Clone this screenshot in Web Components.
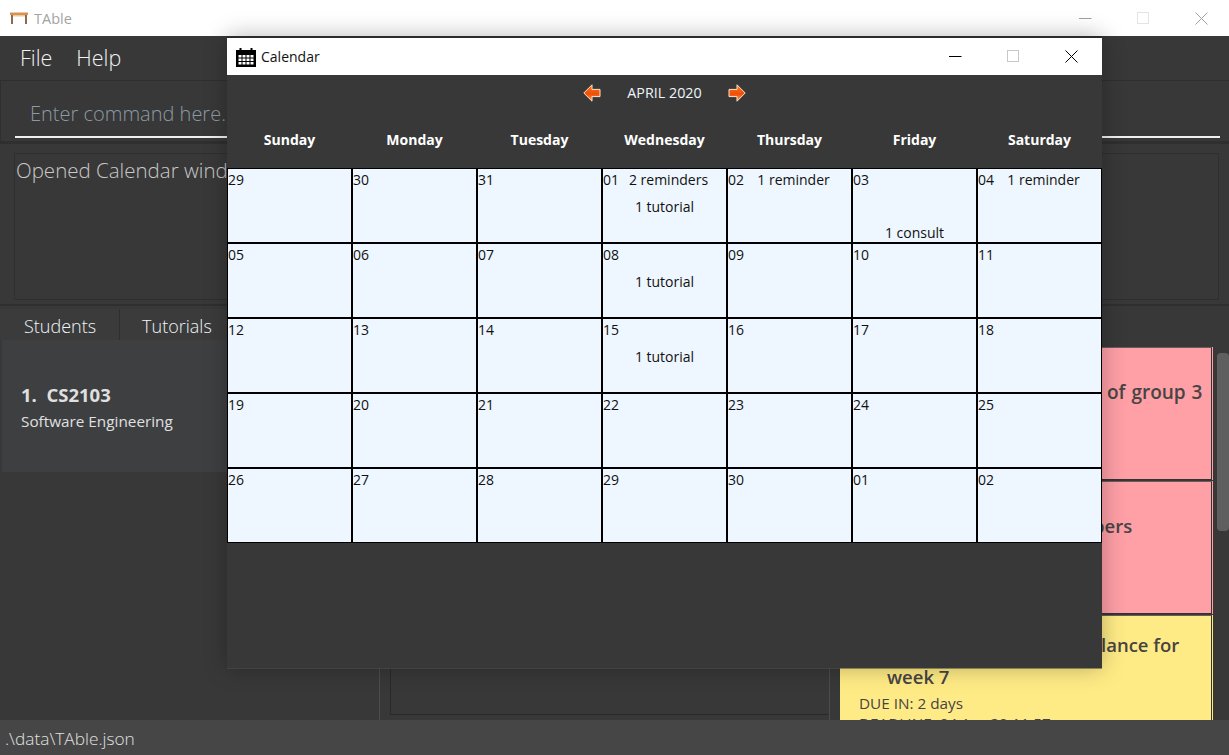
<!DOCTYPE html>
<html>
<head>
<meta charset="utf-8">
<title>TAble</title>
<style>
  html, body { margin: 0; height: 100%; background: #383838; overflow: hidden; }
  body { font-family: "Open Sans", "Noto Sans", sans-serif; }
</style>
</head>
<body>
<table-app></table-app>
<script>
const winButtons = (dark) => `
  <svg width="13" height="13" viewBox="0 0 13 13"><path d="M0 6.5h12.5" stroke="${dark ? '#000' : '#a0a0a0'}" fill="none"/></svg>
  <svg width="13" height="13" viewBox="0 0 13 13"><rect x=".5" y=".5" width="11" height="11" stroke="${dark ? '#c8c8c8' : '#e4e4e4'}" fill="none"/></svg>
  <svg width="13" height="13" viewBox="0 0 13 13"><path d="M.5 .5l12 12M12.5 .5l-12 12" stroke="${dark ? '#000' : '#a0a0a0'}" fill="none"/></svg>`;

class AppTitlebar extends HTMLElement {
  constructor() {
    super();
    this.attachShadow({ mode: 'open' });
    this.shadowRoot.innerHTML = `
      <style>
        :host { display: flex; align-items: center; height: 36px; background: #fff; color: #a3a3a3; font-size: 14.5px; padding-left: 10px; box-sizing: border-box; }
        svg.logo { margin-right: 6px; }
        .controls { margin-left: auto; display: flex; gap: 45px; padding-right: 21px; }
      </style>
      <svg class="logo" width="18" height="14" viewBox="0 0 18 14">
        <path d="M0 1.500h18v2.500H0z" fill="#d9914f"/>
        <path d="M1 4h2v9H1zM15 4h2v9h-2z" fill="#8f6a4e"/>
        <path d="M3 4h12v1.500H3z" fill="#e8c9a8"/>
      </svg>
      <span>TAble</span>
      <div class="controls">${winButtons(false)}</div>`;
  }
}

class AppMenu extends HTMLElement {
  constructor() {
    super();
    this.attachShadow({ mode: 'open' });
    this.shadowRoot.innerHTML = `
      <style>
        :host { display: flex; gap: 24px; height: 44px; align-items: center; padding: 0 0 2px 20px; box-sizing: border-box; color: #f2f2f2; font-size: 21.5px; font-weight: 300; }
      </style>
      <span>File</span><span>Help</span>`;
  }
}

class CommandBox extends HTMLElement {
  constructor() {
    super();
    this.attachShadow({ mode: 'open' });
    this.shadowRoot.innerHTML = `
      <style>
        :host { display: block; height: 64px; box-sizing: border-box; border: 1px solid #2f2f2f; border-width: 1px 0 3px 1px; padding: 0 9px 0 14px; }
        .field { height: 57px; box-sizing: border-box; border-bottom: 2px solid #f0f0f0; padding: 17px 0 0 15px; color: #8d9aa3; font-size: 20px; font-weight: 300; line-height: 32px; }
      </style>
      <div class="field">Enter command here.</div>`;
  }
}

class ResultBox extends HTMLElement {
  constructor() {
    super();
    this.attachShadow({ mode: 'open' });
    this.shadowRoot.innerHTML = `
      <style>
        :host { display: block; height: 162px; box-sizing: border-box; border-bottom: 2px solid #2f2f2f; padding: 9px 10px 4px 14px; }
        .inner { height: 100%; box-sizing: border-box; border: 1px solid #2f2f2f; padding: 0 1px; color: #c9c9c9; font-size: 20.5px; font-weight: 300; line-height: 32px; }
      </style>
      <div class="inner">Opened Calendar wind</div>`;
  }
}

class ListPanel extends HTMLElement {
  constructor() {
    super();
    this.attachShadow({ mode: 'open' });
    this.shadowRoot.innerHTML = `
      <style>
        :host { display: block; width: 379px; border-right: 1px solid #4c4c4c; }
        .tabs { display: flex; height: 31px; margin-top: 3px; color: #eef6fa; font-size: 18px; font-weight: 300; line-height: 34px; }
        .tabs span { padding: 0 23px 0 24px; background: #3b3b3b; border-right: 1px solid #2f2f2f; }
        .tabs span + span { padding-left: 22px; }
        .card { height: 132px; margin-left: 2px; background: #3e3f41; padding: 42px 0 0 19px; box-sizing: border-box; color: #e0e0e0; }
        .title { font-size: 18.5px; font-weight: 700; line-height: 26px; white-space: pre; }
        .desc { font-size: 15.3px; line-height: 27px; }
      </style>
      <div class="tabs"><span>Students</span><span>Tutorials</span></div>
      <div class="card">
        <div class="title">1.  CS2103</div>
        <div class="desc">Software Engineering</div>
      </div>`;
  }
}

class MiddlePanel extends HTMLElement {
  constructor() {
    super();
    this.attachShadow({ mode: 'open' });
    this.shadowRoot.innerHTML = `
      <style>
        :host { display: block; width: 450px; box-sizing: border-box; padding: 0 0 5px 10px; border-right: 1px solid #4c4c4c; }
        .box { height: 100%; box-sizing: border-box; border: 1px solid #2a2a2a; border-right: 0; }
      </style>
      <div class="box"></div>`;
  }
}

class ReminderCard extends HTMLElement {
  constructor() {
    super();
    this.attachShadow({ mode: 'open' });
    this.shadowRoot.innerHTML = `
      <style>
        :host { display: block; height: 133px; margin-bottom: 1px; box-sizing: border-box; background: var(--card, #ff9fa6); padding-right: 1px; color: #474444; }
        .inner { height: 100%; box-sizing: border-box; border: 1px solid #6e5a5a; border-left: 0; border-right-color: #333; border-bottom-color: #333; padding: var(--pad, 28px 0 0 267px); }
        ::slotted(.title) { font-size: 18.5px; font-weight: 600; line-height: 32px; white-space: pre; }
        ::slotted(p) { margin: 0; font-size: 15.3px; line-height: 21px; white-space: pre; }
      </style>
      <div class="inner"><slot></slot></div>`;
  }
}

class RightPanel extends HTMLElement {
  constructor() {
    super();
    this.attachShadow({ mode: 'open' });
    this.shadowRoot.innerHTML = `
      <style>
        :host { display: block; flex: 1; position: relative; padding: 41px 16px 0 10px; overflow: hidden; }
        .thumb { position: absolute; right: 0; top: 47px; width: 12px; height: 178px; background: #5f5f5f; border-radius: 4px; }
      </style>
      <slot></slot>
      <div class="thumb"></div>`;
  }
}

class StatusBar extends HTMLElement {
  constructor() {
    super();
    this.attachShadow({ mode: 'open' });
    this.shadowRoot.innerHTML = `
      <style>
        :host { display: flex; align-items: center; height: 35px; flex: none; background: #464646; color: #e0e0e0; padding: 2px 0 0 5px; box-sizing: border-box; font-size: 17.3px; font-weight: 300; }
      </style>
      <slot></slot>`;
  }
}

class CalCell extends HTMLElement {
  constructor() {
    super();
    this.attachShadow({ mode: 'open' });
    const g = (n) => this.getAttribute(n) || '';
    this.shadowRoot.innerHTML = `
      <style>
        :host { display: block; background: #eef6ff; color: #111; font-size: 14px; position: relative; }
        .date { position: absolute; left: 0; top: 1px; line-height: 20px; }
        .rows { display: grid; grid-template-rows: 21px 27px 26px; height: 100%; text-align: center; line-height: 20px; }
        .rows div:first-child { padding: 1px 0 0 8px; }
        .rows div:nth-child(2) { padding-top: 7px; }
        .rows div:nth-child(3) { padding-top: 6px; }
      </style>
      <span class="date">${g('date')}</span>
      <div class="rows"><div>${g('reminder')}</div><div>${g('tutorial')}</div><div>${g('consult')}</div></div>`;
  }
}

class CalendarWindow extends HTMLElement {
  constructor() {
    super();
    this.attachShadow({ mode: 'open' });
    const days = ['Sunday', 'Monday', 'Tuesday', 'Wednesday', 'Thursday', 'Friday', 'Saturday'];
    const arrow = (flip) => `
      <svg width="18" height="18" viewBox="0 0 18 18"${flip ? ' style="transform:scaleX(-1)"' : ''}>
        <path d="M9 .8L.8 9 9 17.200V12.600h8V5.400H9z" fill="url(#g${flip ? 'r' : 'l'})" stroke="#ffe2c8" stroke-width="1"/>
        <defs><linearGradient id="g${flip ? 'r' : 'l'}" x1="0" y1="0" x2="0" y2="1">
          <stop offset="0" stop-color="#ff7a1c"/><stop offset=".55" stop-color="#ef4e08"/><stop offset="1" stop-color="#ff9a50"/>
        </linearGradient></defs>
      </svg>`;
    this.shadowRoot.innerHTML = `
      <style>
        :host { display: flex; flex-direction: column; position: absolute; left: 227px; top: 36px; width: 875px; height: 632px; background: #383838; border-top: 2px solid #2b2b2b; box-sizing: border-box; box-shadow: 0 1px 0 rgba(80,80,70,.6), 0 0 22px rgba(0,0,0,.28); }
        .bar { display: flex; align-items: center; height: 37px; flex: none; background: #fff; color: #111; font-size: 14px; padding-left: 9px; }
        .bar svg.ico { margin-right: 5px; }
        .controls { margin-left: auto; display: flex; gap: 45px; padding-right: 24px; }
        .nav { display: flex; justify-content: center; align-items: center; gap: 26px; height: 35px; flex: none; color: #eef5fb; font-size: 14.3px; }
        .heads { display: grid; grid-template-columns: repeat(7, 1fr); height: 58px; flex: none; align-items: center; text-align: center; color: #fff; font-size: 14px; font-weight: 700; padding-top: 1px; box-sizing: border-box; }
        .grid { display: grid; grid-template-columns: repeat(7, 123px); grid-auto-rows: 73px; gap: 2px; padding: 1px; background: #000; }
        .grid-wrap { flex: none; }
      </style>
      <div class="bar">
        <svg class="ico" width="20" height="20" viewBox="0 0 20 20">
          <path d="M0 3h3.500V1h2v2h9V1h2v2H20v17H0z" fill="#000"/>
          <path d="M2.500 8h3v2.500h-3zM6.500 8h3v2.500h-3zM10.500 8h3v2.500h-3zM14.500 8h3v2.500h-3zM2.500 11.500h3V14h-3zM6.500 11.500h3V14h-3zM10.500 11.500h3V14h-3zM14.500 11.500h3V14h-3zM2.500 15h3v2.500h-3zM6.500 15h3v2.500h-3zM10.500 15h3v2.500h-3zM14.500 15h3v2.500h-3z" fill="#fff"/>
        </svg>
        <span>Calendar</span>
        <div class="controls">${winButtons(true)}</div>
      </div>
      <div class="nav">${arrow(false)}<span>APRIL 2020</span>${arrow(true)}</div>
      <div class="heads">${days.map(d => `<span>${d}</span>`).join('')}</div>
      <div class="grid-wrap"><div class="grid"><slot></slot></div></div>`;
  }
}

class TableApp extends HTMLElement {
  constructor() {
    super();
    this.attachShadow({ mode: 'open' });
    // april 2020 as the window shows it, first row starts on 29 march
    const dates = ['29','30','31','01','02','03','04','05','06','07','08','09','10','11','12','13','14','15','16','17','18','19','20','21','22','23','24','25','26','27','28','29','30','01','02'];
    const extra = {
      3: 'reminder="2 reminders" tutorial="1 tutorial"',
      4: 'reminder="1 reminder"',
      5: 'consult="1 consult"',
      6: 'reminder="1 reminder"',
      10: 'tutorial="1 tutorial"',
      17: 'tutorial="1 tutorial"'
    };
    const cells = dates.map((d, i) => `<cal-cell date="${d}" ${extra[i] || ''}></cal-cell>`).join('');
    this.shadowRoot.innerHTML = `
      <style>
        :host { display: flex; flex-direction: column; height: 755px; position: relative; overflow: hidden; color: #fff; }
        .panels { flex: 1; display: flex; min-height: 0; }
      </style>
      <app-titlebar></app-titlebar>
      <app-menu></app-menu>
      <command-box></command-box>
      <result-box></result-box>
      <div class="panels">
        <list-panel></list-panel>
        <middle-panel></middle-panel>
        <right-panel>
          <reminder-card><div class="title" style="font-size:19px;word-spacing:1px">of group 3</div></reminder-card>
          <reminder-card style="--pad:28px 0 0 253px"><div class="title">pers</div></reminder-card>
          <reminder-card style="--card:#ffeb85;--pad:13px 0 0 19px">
            <div class="title" style="padding-left:242px">lance for</div>
            <div class="title" style="padding-left:28px">week 7</div>
            <p>DUE IN: 2 days</p>
            <p style="margin-top:-1px">DEADLINE: 04 Apr 20 11:57</p>
          </reminder-card>
        </right-panel>
      </div>
      <status-bar>.\\data\\TAble.json</status-bar>
      <calendar-window>${cells}</calendar-window>`;
  }
}

customElements.define('app-titlebar', AppTitlebar);
customElements.define('app-menu', AppMenu);
customElements.define('command-box', CommandBox);
customElements.define('result-box', ResultBox);
customElements.define('list-panel', ListPanel);
customElements.define('middle-panel', MiddlePanel);
customElements.define('reminder-card', ReminderCard);
customElements.define('right-panel', RightPanel);
customElements.define('status-bar', StatusBar);
customElements.define('cal-cell', CalCell);
customElements.define('calendar-window', CalendarWindow);
customElements.define('table-app', TableApp);
</script>
</body>
</html>
